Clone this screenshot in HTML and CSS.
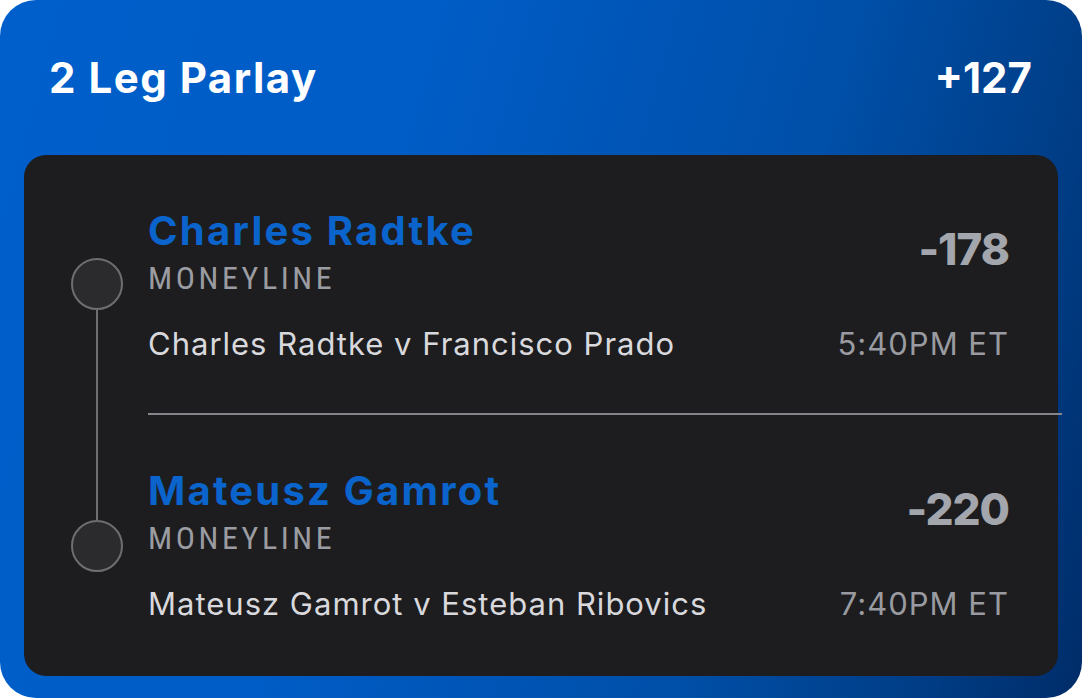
FILE: index.html
```html
<!DOCTYPE html>
<html>
<head>
<meta charset="utf-8">
<link rel="stylesheet" href="styles.css">
</head>
<body>
<div class="card">
  <div class="header">
    <div class="title">2 Leg Parlay</div>
    <div class="total">+127</div>
  </div>
  <div class="panel">
    <div class="leg leg-first">
      <div class="rail">
        <div class="rail-top"></div>
        <div class="dot"></div>
        <div class="rail-line"></div>
      </div>
      <div class="body">
        <div class="main">
          <div class="info">
            <div class="name">Charles Radtke</div>
            <div class="market">MONEYLINE</div>
          </div>
          <div class="odds">-178</div>
        </div>
        <div class="meta">
          <div class="match">Charles Radtke v Francisco Prado</div>
          <div class="time">5:40PM ET</div>
        </div>
        <div class="divider"></div>
      </div>
    </div>
    <div class="leg leg-last">
      <div class="rail">
        <div class="rail-line rail-in"></div>
        <div class="dot"></div>
        <div class="rail-bottom"></div>
      </div>
      <div class="body">
        <div class="main">
          <div class="info">
            <div class="name">Mateusz Gamrot</div>
            <div class="market">MONEYLINE</div>
          </div>
          <div class="odds">-220</div>
        </div>
        <div class="meta">
          <div class="match">Mateusz Gamrot v Esteban Ribovics</div>
          <div class="time">7:40PM ET</div>
        </div>
      </div>
    </div>
  </div>
</div>
</body>
</html>
```
FILE: styles.css
```css
html, body {
  margin: 0;
  padding: 0;
  background: #ffffff;
}
body {
  width: 1083px;
  height: 700px;
  overflow: hidden;
  font-family: "Inter", "Noto Sans", sans-serif;
}
.card {
  width: 1082px;
  height: 698px;
  border-radius: 36px;
  background: linear-gradient(105deg, #005fcb 0%, #005cc6 35%, #004fa8 68%, #003c84 88%, #002c68 100%);
  display: flex;
  flex-direction: column;
  box-sizing: border-box;
  padding: 0 24px 22px 24px;
}
.header {
  height: 155px;
  flex: none;
  display: flex;
  align-items: center;
  justify-content: space-between;
  padding: 0 26px 0 25px;
  color: #ffffff;
  font-weight: 700;
  font-size: 42px;
}
.title { letter-spacing: 1.5px; }
.total { letter-spacing: 0; }
.panel {
  flex: 1;
  width: 1034px;
  background: #1d1d1f;
  border-radius: 22px;
  display: flex;
  flex-direction: column;
}
.leg {
  display: flex;
}
.leg-first { height: 260px; }
.leg-last { flex: 1; }
.rail {
  width: 124px;
  flex: none;
  display: flex;
  flex-direction: column;
  align-items: flex-start;
  padding-left: 47px;
  box-sizing: border-box;
}
.leg-first .rail-top { height: 103px; flex: none; }
.dot {
  width: 52px;
  height: 52px;
  box-sizing: border-box;
  flex: none;
  border-radius: 50%;
  background: #2b2b2e;
  border: 2px solid #6d6e72;
}
.rail-line {
  width: 2px;
  flex: 1;
  margin-left: 25px;
  background: #6d6e72;
}
.rail-in { flex: none; height: 105px; }
.rail-bottom { flex: 1; }
.body {
  flex: 1;
  display: flex;
  flex-direction: column;
  padding-right: 49px;
  padding-top: 56px;
}
.main {
  display: flex;
  justify-content: space-between;
  align-items: center;
}
.name {
  color: #0a64cc;
  font-weight: 700;
  font-size: 40px;
  line-height: 40px;
  letter-spacing: 2.2px;
}
.market {
  color: #9a9ca1;
  font-family: "Roboto Condensed", "Roboto", "Liberation Sans", sans-serif;
  font-stretch: 80%;
  font-size: 32px;
  line-height: 40px;
  letter-spacing: 3.6px;
  margin-top: 7px;
}
.odds {
  color: #a3a6ac;
  font-weight: 800;
  font-size: 44px;
  line-height: 44px;
  letter-spacing: -1px;
  margin-bottom: 11px;
}
.meta {
  display: flex;
  justify-content: space-between;
  align-items: baseline;
  margin-top: 28px;
  font-size: 31px;
  line-height: 36px;
  letter-spacing: 1px;
}
.match { color: #d9d9dd; }
.time { color: #999ba0; }
.divider {
  margin-top: auto;
  margin-bottom: 0;
  height: 2px;
  background: #85868b;
  margin-right: -53px;
}
```
